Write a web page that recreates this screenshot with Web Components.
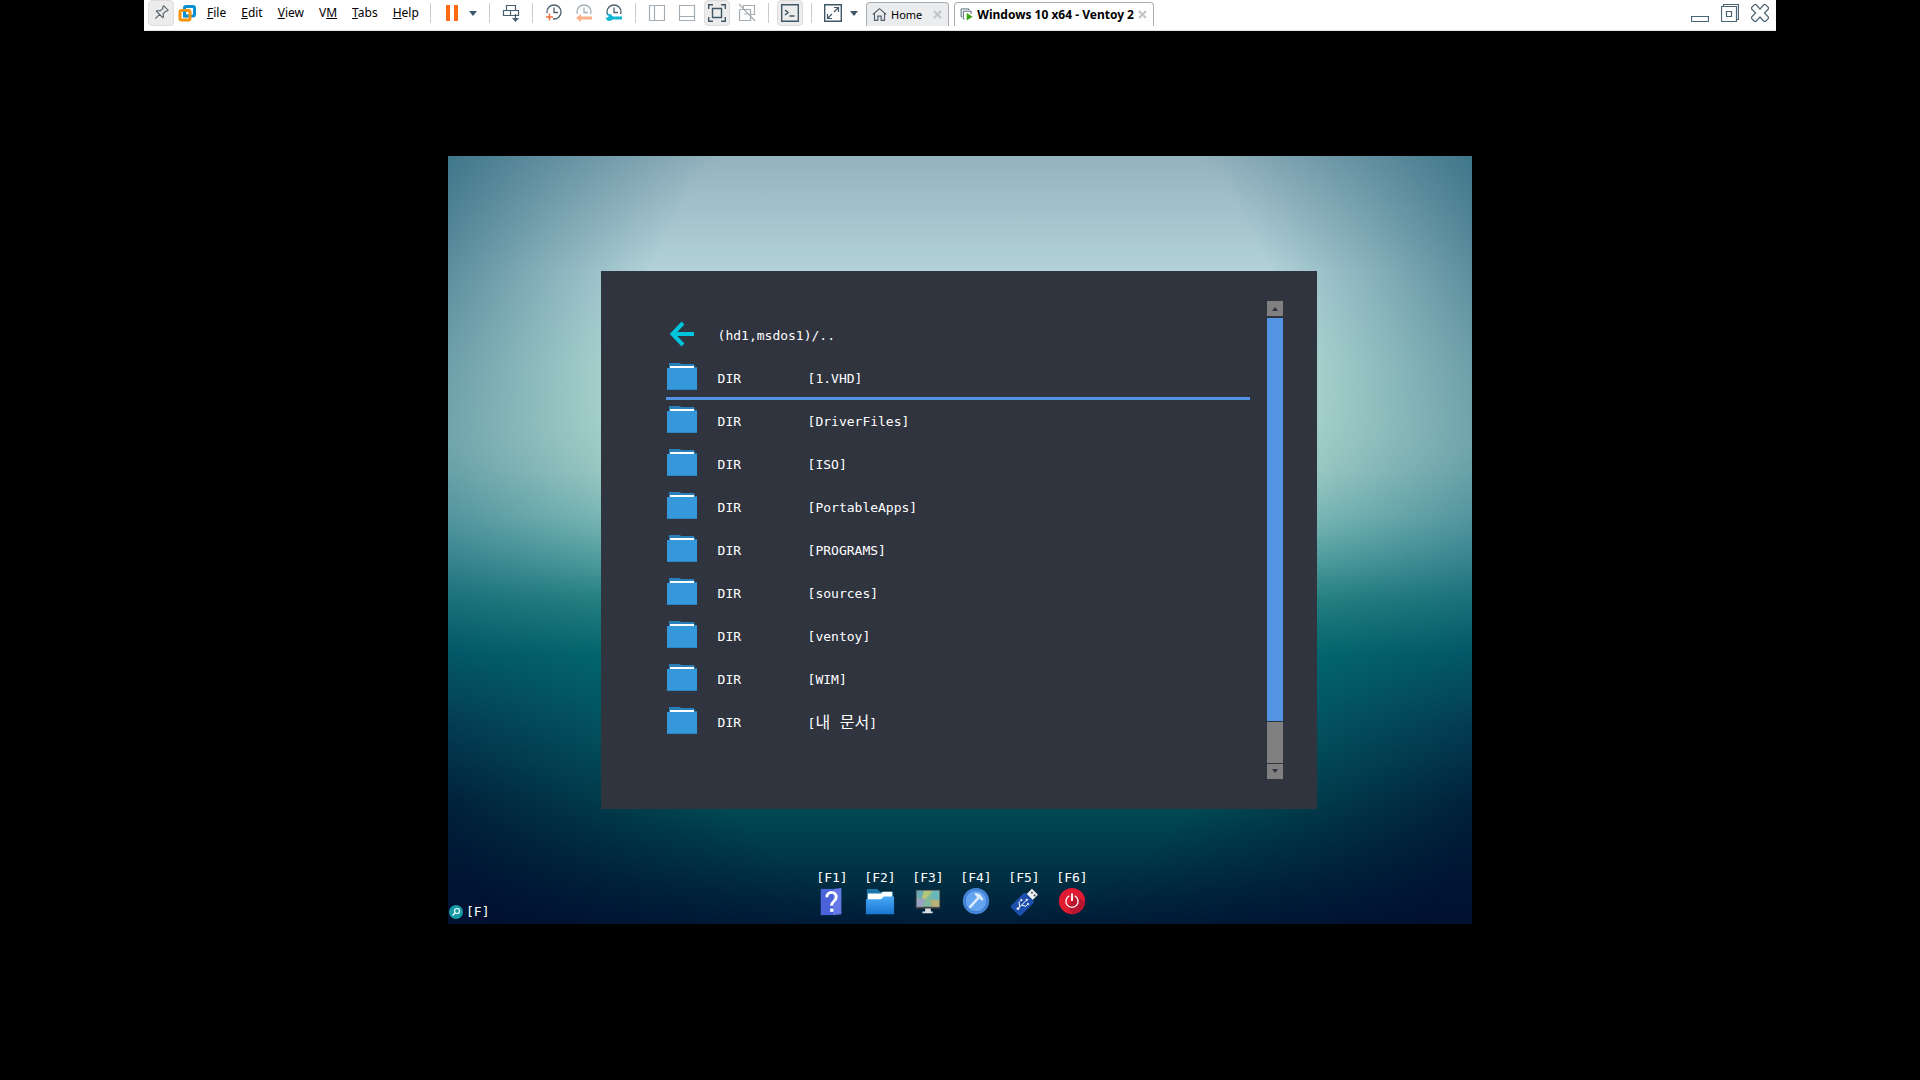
<!DOCTYPE html>
<html lang="en">
<head>
<meta charset="utf-8">
<title>Windows 10 x64 - Ventoy 2</title>
<style>
html, body { margin: 0; height: 100%; background: #000; }
</style>
</head>
<body>
<vm-desktop></vm-desktop>
<script>
/* setup runs on the cloned content before it is attached, so nested elements start with their attributes */
const define = (name, html, setup) => {
  const template = document.createElement('template');
  template.innerHTML = html;
  customElements.define(name, class extends HTMLElement {
    connectedCallback() {
      if (this.shadowRoot) return;
      const content = template.content.cloneNode(true);
      if (setup) setup(this, content);
      this.attachShadow({ mode: 'open' }).append(content);
    }
  });
};

const clock = '<circle cx="9" cy="8" r="7" fill="none" stroke="#4a5f6e" stroke-width="1.3"/><path d="M9 3.500v5h4" fill="none" stroke="#4a5f6e" stroke-width="1.3"/>';
const icons = {
  pin: '<g transform="rotate(45 9 9)" fill="none" stroke="#5a6770" stroke-width="1.2"><path d="M6 2h6v1.500l-1 1V8l2.500 2v1h-9v-1L7 8V4.500l-1-1zM9 11v6"/></g>',
  logo: '<rect x="6.500" y="2.500" width="10" height="9.500" rx="1.500" fill="none" stroke="#0b91d0" stroke-width="3"/><rect x="2" y="6.500" width="10" height="9.500" rx="1.500" fill="none" stroke="#f7920b" stroke-width="3"/><path d="M6.500 7.500V12H9" fill="none" stroke="#0b91d0" stroke-width="3"/>',
  pause: '<path d="M3 1h4v16H3zM11 1h4v16h-4z" fill="#ff6a13"/>',
  send: '<g fill="none" stroke="#4a5f6e" stroke-width="1.2"><path d="M4.500 1.500h9v5h-9zM1.500 6.500h7v5h-7zM8.500 6.500h8v5h-8zM13.500 10v5"/></g><path d="M10 14h7l-3.500 4z" fill="#4a5f6e"/>',
  snap: clock + '<path d="M0 9h8v9H0z" fill="#fff"/><path d="M1 13h7M4.500 9.500v7" stroke="#f26b3a" stroke-width="1.4"/>',
  revert: '<g opacity=".5">' + clock + '</g><path d="M0 10h18v8H0z" fill="#fff"/><path d="M1 14l5-4v2.500h11v3H6V18z" fill="#ffb189"/>',
  manage: clock + '<path d="M0 10h18v8H0z" fill="#fff"/><path d="M1 10.500l3 1.500-2 2-1.500-1C1 16 3 18 6 16.500l2-1h9v-3H8l-2-2c-1-.8-3-1-5 0z" fill="#10b7d4"/>',
  side: '<path d="M1.500 1.500h15v15h-15zM6.500 1.500v15" fill="none" stroke="#a5adb4" stroke-width="1.200"/>',
  strip: '<path d="M1.500 1.500h15v15h-15zM1.500 12.500h15" fill="none" stroke="#a5adb4" stroke-width="1.200"/>',
  full: '<path d="M.7 5V.7H5M13 .7h4.300V5M17.300 13v4.300H13M5 17.300H.7V13M4.500 4.500h9v9h-9z" fill="none" stroke="#3f5766" stroke-width="1.400"/>',
  unity: '<path d="M5.500 5V1.500h11v9H13M1.500 5.500h11v11h-11v-11M6 10h3M1 0l16 17" fill="none" stroke="#a5adb4" stroke-width="1.200"/>',
  term: '<path d="M.7.700h16.600v16.600H.7z" fill="none" stroke="#3f5766" stroke-width="1.400"/><path d="M4 6l3 2.500L4 11M8.500 12h5" fill="none" stroke="#3f5766" stroke-width="1.500"/>',
  fit: '<path d="M.7.700h16.600v16.600H.7z" fill="none" stroke="#3f5766" stroke-width="1.400"/><path d="M10 3.500h4.500V8M14 4l-4 4M8 14.500H3.500V10M4 14l4-4" fill="none" stroke="#3f5766" stroke-width="1.200"/>',
  home: '<path d="M1 9l8-7 8 7M3 8v8h4v-5h4v5h4V8" fill="none" stroke="#52616b" stroke-width="1.400"/>',
  vm: '<path d="M3 12H1.500V1.500H12V3M6 15H4.500V4.500H15V8" fill="none" stroke="#3f5766" stroke-width="1.200"/><path d="M9 7l8 5-8 5z" fill="#37a410"/>',
  x: '<path d="M2 2l14 14M16 2L2 16" stroke="#bfc3c6" stroke-width="4" fill="none"/>',
  min: '<path d="M.5 12.500h17v5H.5z" fill="none" stroke="#4b6473" stroke-width="1.200"/>',
  restore: '<path d="M.5 2.500h15v15H.5zM2.500 2V.5h15v15H16M5.500 7.500h5v5h-5z" fill="none" stroke="#4b6473" stroke-width="1.200"/>',
  close: '<path d="M.6 3.500L3.500.6h1.500L9 5l4-4.400h1.500l2.900 2.900V5L13.500 9l3.900 4v1.500l-2.900 2.900H13L9 13l-4 4.400H3.500L.6 14.500V13l4-4-4-4z" fill="none" stroke="#4b6473" stroke-width="1.200"/>'
};

/* 18-unit line icon; --size sets its box */
define('line-icon', '<style>:host{display:block;width:var(--size,18px);height:var(--size,18px)}svg{display:block;width:100%;height:100%}</style><svg viewBox="0 0 18 18" aria-hidden="true"></svg>',
  (el, root) => { root.querySelector('svg').innerHTML = icons[el.getAttribute('name')]; });

define('tool-button', `<style>
:host{display:block;flex:none}
button{display:grid;place-items:center;width:26px;height:26px;margin:0;padding:0;border:1px solid transparent;border-radius:4px;background:none}
:host([on]) button{background:#ececed;border-color:#dedede}
</style><button type="button"><line-icon></line-icon></button>`, (el, root) => {
  root.querySelector('line-icon').setAttribute('name', el.getAttribute('icon'));
  root.querySelector('button').setAttribute('aria-label', el.getAttribute('label'));
});

define('drop-arrow', `<style>
:host{display:block;flex:none}
button{display:block;width:12px;height:26px;margin:0;padding:0;border:0;background:none}
svg{display:block;width:8px;height:5px}
</style><button type="button" aria-label="More"><svg viewBox="0 0 8 5"><path d="M0 0h8L4 5z" fill="#3f5766"/></svg></button>`);

define('tool-rule', '<style>:host{display:block;flex:none;width:1px;height:20px;margin:0 4px;background:#c9cccf}</style>');

define('menu-item', `<style>
:host{display:block}
button{display:block;height:26px;margin:0;padding:0 7px;border:0;background:none;color:#000;font:12px/24px "Noto Sans",sans-serif;white-space:nowrap}
</style><button type="button"><slot></slot></button>`);

define('vm-tab', `<style>
:host{display:flex;align-items:center;box-sizing:border-box;height:24px;gap:4px;padding:0 6px 0 5px;border:1px solid #a9adb1;border-bottom:0;border-radius:4px 4px 0 0;background:#ebecee;--size:15px}
:host([current]){background:#fff}
.name{flex:1;margin:0;padding:0;border:0;background:none;color:#000;text-align:left;font:11px/20px "Noto Sans",sans-serif;white-space:nowrap}
:host([current]) .name{font-weight:700;font-size:12px}
.x{margin:0;padding:0;border:0;background:none;--size:9px}
</style><line-icon></line-icon><button class="name" type="button"><slot></slot></button><button class="x" type="button" aria-label="Close tab"><line-icon name="x"></line-icon></button>`,
  (el, root) => root.querySelector('line-icon').setAttribute('name', el.getAttribute('icon')));

define('vm-toolbar', `<style>
:host{display:flex;align-items:flex-start;justify-content:space-between;box-sizing:border-box;width:85%;height:31px;margin:0 auto;padding:0 3px 0 4px;background:#fff;border-bottom:1px solid #e4e4e4}
.tools{display:flex;align-items:center;gap:4px}
.menus{display:flex;gap:1px;box-sizing:border-box;width:222px}
.tabs{display:flex;gap:5px;align-self:flex-start;padding-top:2px}
.home{width:83px}.guest{width:200px}
.window{display:flex;gap:4px}
</style>
<div class="tools">
<tool-button on icon="pin" label="Pin"></tool-button><line-icon name="logo"></line-icon>
<nav class="menus"><menu-item><u>F</u>ile</menu-item><menu-item><u>E</u>dit</menu-item><menu-item><u>V</u>iew</menu-item><menu-item>V<u>M</u></menu-item><menu-item><u>T</u>abs</menu-item><menu-item><u>H</u>elp</menu-item></nav>
<tool-rule></tool-rule>
<tool-button icon="pause" label="Suspend"></tool-button><drop-arrow></drop-arrow>
<tool-rule></tool-rule>
<tool-button icon="send" label="Send Ctrl+Alt+Del"></tool-button>
<tool-rule></tool-rule>
<tool-button icon="snap" label="Take snapshot"></tool-button><tool-button icon="revert" label="Revert snapshot"></tool-button><tool-button icon="manage" label="Manage snapshots"></tool-button>
<tool-rule></tool-rule>
<tool-button icon="side" label="Library"></tool-button><tool-button icon="strip" label="Thumbnail bar"></tool-button><tool-button on icon="full" label="Full screen"></tool-button><tool-button icon="unity" label="Unity"></tool-button>
<tool-rule></tool-rule>
<tool-button on icon="term" label="Console view"></tool-button>
<tool-rule></tool-rule>
<tool-button icon="fit" label="Stretch guest"></tool-button><drop-arrow></drop-arrow>
<div class="tabs"><vm-tab class="home" icon="home">Home</vm-tab><vm-tab class="guest" current icon="vm">Windows 10 x64 - Ventoy 2</vm-tab></div>
</div>
<div class="window"><tool-button icon="min" label="Minimize"></tool-button><tool-button icon="restore" label="Restore"></tool-button><tool-button icon="close" label="Close"></tool-button></div>`);

define('dir-row', `<style>
:host{display:block}
button{display:grid;grid-template-columns:52px 90px 1fr;align-items:center;box-sizing:border-box;width:100%;height:43px;margin:0;padding:4px 0 0;border:0;border-bottom:3px solid transparent;background:none;color:#fff;text-align:left;font:13px/20px "DejaVu Sans Mono","Noto Sans CJK KR",monospace;white-space:nowrap}
:host([selected]) button{border-color:#5294e2}
:host([back]) button{grid-template-columns:52px 1fr}
svg{display:block;width:32px;height:32px}
::slotted(span){font-size:16px;line-height:20px}
.arrow,:host([back]) .folder,:host([back]) .kind{display:none}
:host([back]) .arrow{display:block}
</style><button type="button">
<svg class="folder" viewBox="0 0 32 32" aria-hidden="true"><path d="M3 0h11l1 1h13l1 3h2v23H1V5h2z" fill="#2980b9"/><path d="M1 5h30v22H1z" fill="#3498db"/><path d="M4 3h24v2H4z" fill="#fff"/><path d="M1 26h30v1H1z" fill="#2c86c4"/></svg>
<svg class="arrow" viewBox="0 0 32 32" aria-hidden="true"><path d="M17 3L6.500 14 17 25M6 14h22" fill="none" stroke="#00c4dc" stroke-width="4"/></svg>
<span class="kind">DIR</span><span><slot></slot></span></button>`);

define('boot-scroll', `<style>
:host{display:flex;flex-direction:column;gap:1px;width:16px}
button{display:grid;place-items:center;width:16px;height:15px;flex:none;margin:0;padding:0;border:0;background:#808080}
svg{display:block;width:6px;height:4px}
.thumb{flex:10 1 0;margin-top:1px;background:#5294e2}
.track{flex:1 1 0;background:#808080}
</style><button type="button" aria-label="Scroll up"><svg viewBox="0 0 6 4"><path d="M3 0l3 4H0z" fill="#2f343f"/></svg></button><div class="thumb"></div><div class="track"></div><button type="button" aria-label="Scroll down"><svg viewBox="0 0 6 4"><path d="M0 0h6L3 4z" fill="#2f343f"/></svg></button>`);

const keyArt = {
  help: '<path d="M4 2h13v28H4z" fill="#4a63db"/><path d="M17 2l9-1v28l-9 1z" fill="#6478e8"/><path d="M10.500 11c0-7 10-7 10 0 0 4-5 4-5 9" fill="none" stroke="#fff" stroke-width="3"/><path d="M14 23h3.500v3.500H14z" fill="#fff"/>',
  folder: '<path d="M2 2h11l3 3h14v12H2z" fill="#1976a8"/><path d="M3 7h14l2-2h10v12H3z" fill="#fff"/><path d="M1 13h16l3-3h11v19H1z" fill="url(#blue)"/>',
  screen: '<path d="M3 3h26v20H3z" fill="#4c4548"/><path d="M4 4h24v17H4z" fill="#80b99b"/><path d="M4 4h8L9 13 4 9z" fill="#67aab5"/><path d="M12 4h9l-8 9-4-1z" fill="#b4c47a"/><path d="M21 4h7v10l-9-1z" fill="#67b8bb"/><path d="M4 12l9 1-3 8H4z" fill="#9a9fc0"/><path d="M19 13l9 1v7h-8z" fill="#b9b078"/><path d="M13 23h6v3h2v2H10v-2h3z" fill="#d9e0e4"/>',
  tools: '<circle cx="16" cy="15" r="14" fill="#4787dc"/><circle cx="16" cy="15" r="11.500" fill="#65a4ef" stroke="#3c77cc"/><path d="M9 22L20 10" stroke="#dcecff" stroke-width="2.600"/><path d="M14 7c4-1 6 0 8 3l2 3-2 2-2-3-3-1z" fill="#dcecff"/>',
  usb: '<g transform="rotate(45 16 16)"><path d="M12 0h9v8h-9z" fill="#eef2f5"/><path d="M14 2h2v2h-2zM18 2h2v2h-2z" fill="#555"/><rect x="9" y="8" width="15" height="22" rx="2" fill="#1d4fae"/><path d="M16.500 12v13M16.500 23l-4-3v-3M16.500 20l4-2v-3" fill="none" stroke="#fff" stroke-width="1"/><path d="M15 13h3l-1.500-2.500z" fill="#fff"/><circle cx="16.500" cy="25.500" r="1.500" fill="#fff"/><path d="M11.500 15.500h2v2h-2zM19.500 13.500h2v2h-2z" fill="#fff"/></g>',
  power: '<circle cx="16" cy="15" r="14" fill="#e01b32"/><path d="M20 9l10 7a14 14 0 0 1-13 13l-6-8z" fill="#b81630"/><path d="M13 9.500a6.500 6.500 0 1 0 6 0" fill="none" stroke="#fff" stroke-width="1.400"/><path d="M16 7v8" stroke="#fff" stroke-width="2"/>'
};
define('fn-key', `<style>
:host{display:block}
button{display:flex;flex-direction:column;align-items:center;width:48px;margin:0;padding:0;border:0;background:none;color:#fff;font:13px/18px "DejaVu Sans Mono",monospace}
svg{display:block;width:30px;height:30px}
</style><button type="button"><span><slot></slot></span><svg viewBox="0 0 32 32" aria-hidden="true"></svg></button>`,
  (el, root) => { root.querySelector('svg').innerHTML = '<defs><linearGradient id="blue" x2="0" y2="1"><stop stop-color="#49aaf5"/><stop offset="1" stop-color="#1976d2"/></linearGradient></defs>' + keyArt[el.getAttribute('icon')]; });

define('boot-search', `<style>
:host{display:block}
button{display:flex;align-items:center;gap:3px;margin:0;padding:0 1px;border:0;background:none;color:#fff;font:13px/18px "DejaVu Sans Mono",monospace}
svg{display:block;width:14px;height:14px}
</style><button type="button"><svg viewBox="0 0 14 14" aria-hidden="true"><circle cx="7" cy="7" r="7" fill="#159ba6"/><circle cx="8" cy="6" r="2.500" fill="none" stroke="#fff" stroke-width="1.200"/><path d="M6 8l-2.500 2.500" stroke="#fff" stroke-width="1.300"/></svg><span><slot></slot></span></button>`);

define('boot-menu', `<style>
:host{display:flex;box-sizing:border-box;width:70%;height:70%;margin-right:2px;padding:30px 34px 30px 65px;gap:17px;background:#2f343f}
.list{flex:1;padding-top:13px}
</style><div class="list"><slot></slot></div><boot-scroll></boot-scroll>`);

define('guest-screen', `<style>
:host{position:relative;isolation:isolate;display:flex;flex-direction:column;align-items:center;box-sizing:border-box;width:min(1024px,100%);aspect-ratio:4/3;
background:linear-gradient(#3a7387,#487f90 16%,#578c9c 28%,#5a93a0 38%,#3f8593 48%,#156a78 58%,#045566 64%,#043650 74%,#02203a 84%,#001030)}
.glow{position:absolute;inset:0;z-index:-1;background:linear-gradient(#94b2be,#b2d2d8 15%,#abd5d0 27%,#a6d1ca 35%,#9ac8c3 41%,#7bb8b6 47%,#4e9c9d 53%,#25807f 58%,#03686f 65%,#035b66 74%,#004c56 84%,#003848 91%,#001d38);
-webkit-mask:radial-gradient(ellipse 57% 96% at 50% 42%,#000 60%,transparent);mask:radial-gradient(ellipse 57% 96% at 50% 42%,#000 60%,transparent)}
.top{flex:3}
.bottom{flex:3;display:grid;grid-template-columns:1fr auto 1fr;align-items:end;box-sizing:border-box;width:100%;padding-right:16px}
.keys{display:flex;padding-bottom:7px}
boot-search{padding-bottom:3px}
</style><div class="glow"></div><div class="top"></div><slot></slot>
<div class="bottom"><boot-search>[F]</boot-search><div class="keys"><fn-key icon="help">[F1]</fn-key><fn-key icon="folder">[F2]</fn-key><fn-key icon="screen">[F3]</fn-key><fn-key icon="tools">[F4]</fn-key><fn-key icon="usb">[F5]</fn-key><fn-key icon="power">[F6]</fn-key></div></div>`);

define('vm-desktop', `<style>
:host{display:grid;grid-template-rows:31px 1fr 31px;min-height:100vh}
main{display:grid;place-items:center}
</style><vm-toolbar></vm-toolbar><main><guest-screen><boot-menu>
<dir-row back>(hd1,msdos1)/..</dir-row>
<dir-row selected>[1.VHD]</dir-row>
<dir-row>[DriverFiles]</dir-row>
<dir-row>[ISO]</dir-row>
<dir-row>[PortableApps]</dir-row>
<dir-row>[PROGRAMS]</dir-row>
<dir-row>[sources]</dir-row>
<dir-row>[ventoy]</dir-row>
<dir-row>[WIM]</dir-row>
<dir-row>[<span lang="ko">내 문서</span>]</dir-row>
</boot-menu></guest-screen></main>`);
</script>
</body>
</html>
